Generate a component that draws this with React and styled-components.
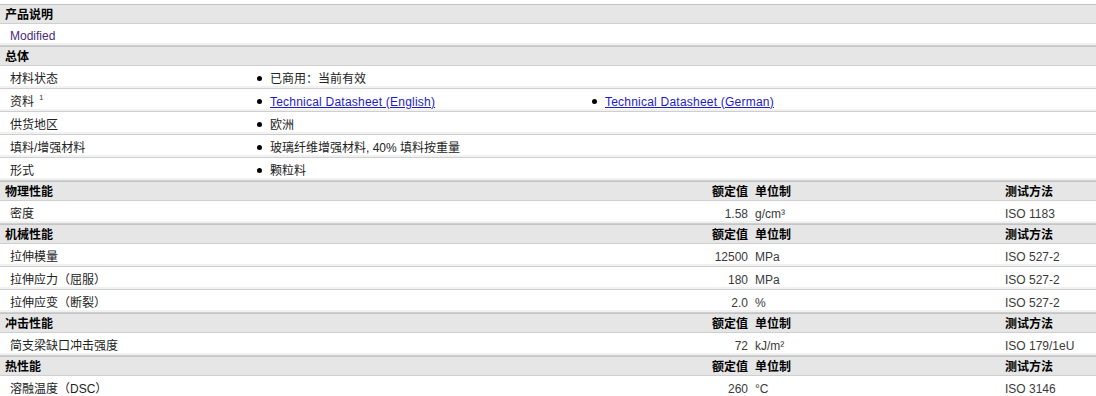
import React from "react";
import styled, { createGlobalStyle } from "styled-components";

const Global = createGlobalStyle`
  html, body { margin: 0; padding: 0; background: #fff; }
  body {
    font-family: "Liberation Sans", "Noto Sans CJK SC", Arial, sans-serif;
    font-size: 12px;
    color: #222;
  }
`;

const Page = styled.div`
  padding-top: 4px;
  width: 1096px;
`;

const cols = `250px 501px 254px 1fr`;

const SectionHead = styled.div`
  display: grid;
  grid-template-columns: ${cols};
  align-items: center;
  height: 20px;
  box-sizing: border-box;
  background: #e6e6e6;
  border-top: 1px solid #c4c4c4;
  border-bottom: 1px solid #cfcfcf;
  font-family: "Noto Sans CJK SC", "Liberation Sans", sans-serif;
  font-weight: 700;
  color: #000;
  line-height: 18px;
`;

const HeadTitle = styled.div`
  padding-left: 5px;
`;

const HeadValue = styled.div`
  text-align: right;
  padding-right: 3px;
`;

const HeadUnit = styled.div`
  padding-left: 4px;
`;

const Row = styled.div`
  display: grid;
  grid-template-columns: ${(p) => (p.$general ? "250px 1fr" : cols)};
  align-items: center;
  height: ${(p) => (p.$short ? 22 : 23)}px;
  padding-top: 3px;
  box-sizing: border-box;
  border-bottom: ${(p) => (p.$last ? "none" : "1px solid #cfcfcf")};
  box-shadow: ${(p) => (p.$last ? "none" : "inset 0 -2px 0 #f1f1f1")};
  line-height: 16px;
`;

const Label = styled.div`
  padding-left: 10px;
  color: ${(p) => p.$color || "#222"};
  font-family: "Liberation Sans", "Noto Sans CJK SC", sans-serif;
  white-space: nowrap;
`;

const Sup = styled.sup`
  font-size: 8px;
  margin-left: 5px;
  vertical-align: 6px;
  line-height: 0;
  color: #444;
`;

const Value = styled.div`
  text-align: right;
  padding-right: 3px;
  color: #3a3a3a;
`;

const Unit = styled.div`
  padding-left: 4px;
  color: #3a3a3a;
`;

const Method = styled.div`
  color: #3a3a3a;
`;

const Items = styled.div`
  display: flex;
  align-items: center;
`;

const Item = styled.div`
  display: flex;
  align-items: center;
  box-sizing: border-box;
  width: ${(p) => (p.$w ? `${p.$w}px` : "auto")};
  padding-left: 7px;
  white-space: nowrap;
  &::before {
    content: "";
    width: 5px;
    height: 5px;
    border-radius: 50%;
    background: #000;
    margin-right: 8px;
    flex: none;
  }
`;

const Link = styled.a`
  color: #1c1ccc;
  text-decoration: underline;
  letter-spacing: 0.22px;
`;

const general = [
  { label: "材料状态", items: ["已商用：当前有效"] },
  {
    label: "资料",
    sup: "1",
    items: [
      { link: "Technical Datasheet (English)" },
      { link: "Technical Datasheet (German)" },
    ],
  },
  { label: "供货地区", items: ["欧洲"] },
  { label: "填料/增强材料", items: ["玻璃纤维增强材料, 40% 填料按重量"] },
  { label: "形式", items: ["颗粒料"] },
];

const sections = [
  {
    title: "物理性能",
    rows: [["密度", "1.58", "g/cm³", "ISO 1183"]],
  },
  {
    title: "机械性能",
    rows: [
      ["拉伸模量", "12500", "MPa", "ISO 527-2"],
      ["拉伸应力（屈服）", "180", "MPa", "ISO 527-2"],
      ["拉伸应变（断裂）", "2.0", "%", "ISO 527-2"],
    ],
  },
  {
    title: "冲击性能",
    rows: [["简支梁缺口冲击强度", "72", "kJ/m²", "ISO 179/1eU"]],
  },
  {
    title: "热性能",
    rows: [["溶融温度（DSC）", "260", "°C", "ISO 3146"]],
  },
];

export default function App() {
  return (
    <Page>
      <Global />
      <SectionHead>
        <HeadTitle>产品说明</HeadTitle>
      </SectionHead>
      <Row $general $short>
        <Label $color="#4a2a7c">Modified</Label>
      </Row>
      <SectionHead>
        <HeadTitle>总体</HeadTitle>
      </SectionHead>
      {general.map((g) => (
        <Row $general key={g.label}>
          <Label>
            {g.label}
            {g.sup && <Sup>{g.sup}</Sup>}
          </Label>
          <Items>
            {g.items.map((it, j) => (
              <Item key={j} $w={g.items.length > 1 && j === 0 ? 335 : 0}>
                {typeof it === "string" ? it : <Link href="#">{it.link}</Link>}
              </Item>
            ))}
          </Items>
        </Row>
      ))}
      {sections.map((s, si) => (
        <React.Fragment key={s.title}>
          <SectionHead>
            <HeadTitle>{s.title}</HeadTitle>
            <HeadValue>额定值</HeadValue>
            <HeadUnit>单位制</HeadUnit>
            <div>测试方法</div>
          </SectionHead>
          {s.rows.map((r, ri) => (
            <Row key={r[0]} $last={si === sections.length - 1 && ri === s.rows.length - 1}>
              <Label>{r[0]}</Label>
              <Value>{r[1]}</Value>
              <Unit>{r[2]}</Unit>
              <Method>{r[3]}</Method>
            </Row>
          ))}
        </React.Fragment>
      ))}
    </Page>
  );
}
